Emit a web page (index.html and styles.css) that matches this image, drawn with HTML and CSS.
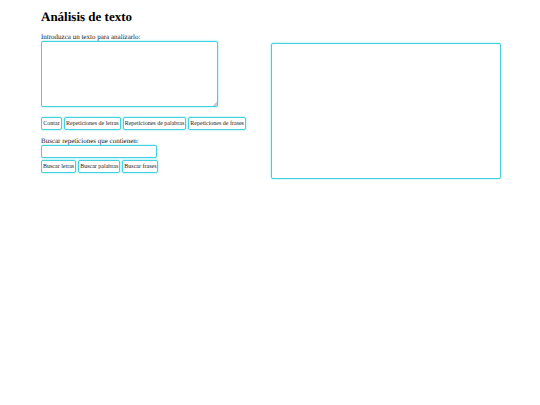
FILE: index.html
```html
<!DOCTYPE html>
<html lang="es">
<head>
    <meta charset="UTF-8">
    <meta name="viewport" content="width=device-width, initial-scale=1.0">
    <title>Análisis de texto</title>
    <link rel="stylesheet" href="styles.css">
</head>
<body>

    <h1>Análisis de texto</h1>

    <main class="contenedor">
        <section class="formulario">
            <label for="texto">Introduzca un texto para analizarlo:</label>
            <textarea id="texto" class="caja texto"></textarea>
            <div class="botones">
                <button type="button" class="caja">Contar</button>
                <button type="button" class="caja">Repeticiones de letras</button>
                <button type="button" class="caja">Repeticiones de palabras</button>
                <button type="button" class="caja">Repeticiones de frases</button>
            </div>

            <label for="buscar">Buscar repeticiones que contienen:</label>
            <input type="text" id="buscar" class="caja buscar">
            <div class="botones">
                <button type="button" class="caja">Buscar letras</button>
                <button type="button" class="caja">Buscar palabras</button>
                <button type="button" class="caja">Buscar frases</button>
            </div>
        </section>

        <output class="caja resultado" for="texto buscar" aria-label="Resultado"></output>
    </main>

</body>
</html>
```

FILE: styles.css
```css
* {
    box-sizing: border-box;
}
body {
    margin: 9px 39px 0 41px;
    font-family: "Liberation Serif", "Times New Roman", serif;
    font-size: 7px;
    line-height: 8px;
    color: #222;
    background-color: #fff;
    text-rendering: geometricPrecision;
}
h1 {
    margin: 0 0 8px;
    font-size: 13px;
    line-height: 16px;
    color: #000;
}
.contenedor {
    display: grid;
    grid-template-columns: 1fr 1fr;
    align-items: start;
}
label {
    display: block;
}
.caja {
    display: block;
    margin: 0;
    border: 1px solid #48cfdf;
    border-radius: 2px;
    background-color: #fff;
    box-shadow: 0 0 2px #5ce6f2;
    font-family: inherit;
    outline: none;
}
.texto {
    width: 77%;
    height: 66px;
    margin-bottom: 10px;
    padding: 1px;
    resize: both;
}
.texto::-webkit-resizer {
    background: linear-gradient(135deg, transparent 85%, #ccc 85%);
}
.buscar {
    width: 116px;
    height: 13px;
    margin-bottom: 2px;
    padding: 1px;
}
.botones {
    display: flex;
    gap: 2px;
    margin-bottom: 7px;
}
.botones button {
    min-width: 21px;
    height: 13px;
    padding: 0 1px;
    font-size: 6px;
    line-height: 11px;
    white-space: nowrap;
    color: #222;
    cursor: pointer;
}
.resultado {
    height: 136px;
    margin-top: 10px;
}
```
